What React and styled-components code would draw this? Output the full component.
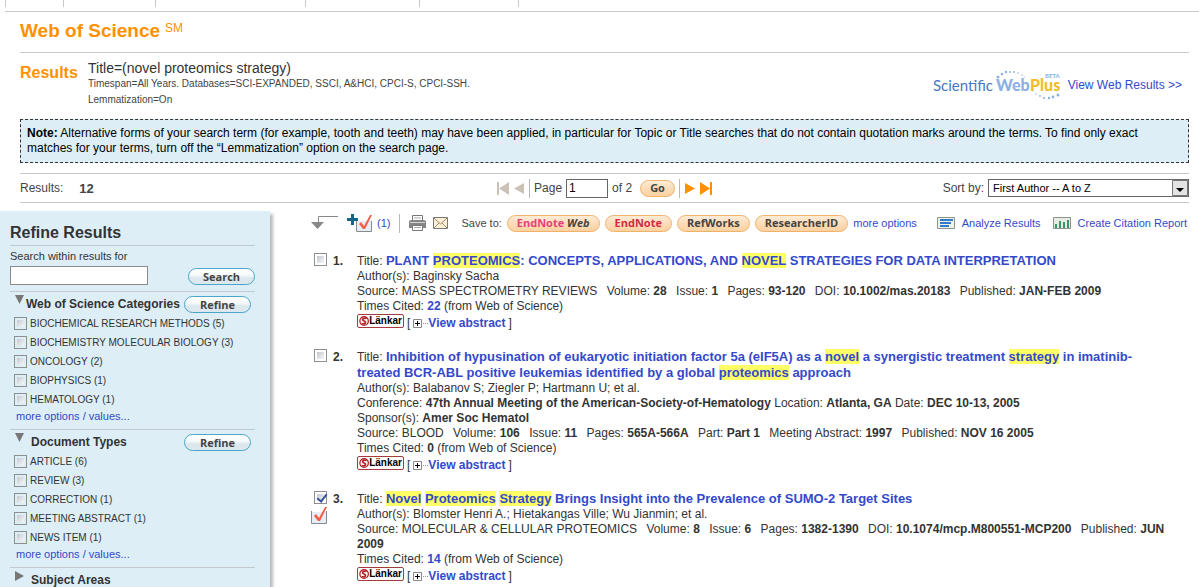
import React, { useState } from "react";
import styled, { createGlobalStyle, css } from "styled-components";

const GlobalStyle = createGlobalStyle`
  * {
    box-sizing: border-box;
  }
  body {
    margin: 0;
    background: #fff;
    color: #333;
    font-family: "Liberation Sans", Arial, sans-serif;
    font-size: 12px;
    line-height: 15px;
  }
  a {
    color: #3349cc;
    text-decoration: none;
  }
`;

const Page = styled.div`
  height: 100vh;
  overflow: hidden;
  display: flex;
  flex-direction: column;
`;

const TabStrip = styled.div`
  display: flex;
  height: 12px;
  margin-left: 5px;
  padding-bottom: 4px;
  border-bottom: 1px solid #c8c8c8;
`;

const TabGap = styled.div`
  width: ${(p) => p.$width}px;
  border-left: 1px solid #c8c8c8;
`;

const Content = styled.div`
  padding: 0 10px 0 20px;
`;

const Brand = styled.h1`
  display: flex;
  align-items: flex-start;
  gap: 5px;
  height: 41px;
  margin: 0;
  padding-top: 8px;
  border-bottom: 1px solid #c8c8c8;
  color: #ff9100;
  font-size: 19px;
  line-height: 22px;

  sup {
    font-size: 12px;
    font-weight: normal;
    line-height: 16px;
  }
`;

const Query = styled.section`
  display: flex;
  align-items: flex-start;
  height: 66px;
  padding-top: 7px;
`;

const QueryLabel = styled.h2`
  width: 68px;
  margin: 0;
  padding-top: 3px;
  color: #ff9100;
  font-size: 16px;
  line-height: 20px;
`;

const QueryText = styled.div`
  flex: 1;
  color: #444;
  font-size: 10px;
  line-height: 16px;

  strong {
    display: block;
    color: #333;
    font-size: 14px;
    font-weight: normal;
  }
`;

const WebPlus = styled.div`
  display: flex;
  align-items: flex-start;
  gap: 7px;
  padding: 9px 7px 0 0;

  a {
    padding-top: 9px;
  }
`;

const Note = styled.p`
  margin: 0 0 10px;
  padding: 6px;
  border: 1px dashed #333;
  background: #ddeef7;
  color: #000;
`;

const ResultBar = styled.div`
  display: grid;
  grid-template-columns: 1fr auto 1fr;
  align-items: center;
  height: 30px;
  border-top: 1px solid #c8c8c8;
  border-bottom: 1px solid #c8c8c8;
  color: #444;
`;

const Count = styled.div`
  display: flex;
  gap: 16px;

  b {
    font-size: 13px;
  }
`;

const Pager = styled.form`
  display: flex;
  align-items: center;
  gap: 4px;
`;

const PageTotal = styled.span`
  padding-right: 4px;
`;

const PageInput = styled.input`
  width: 42px;
  height: 19px;
  padding: 0 2px;
  border: 1px solid #666;
  font: 12px "Liberation Sans", Arial, sans-serif;
`;

const ArrowButton = styled.button`
  display: flex;
  padding: 0;
  border: 0;
  background: none;
`;

const Rule = styled.span`
  width: 1px;
  height: 19px;
  background: #b8b8b8;
`;

const Pill = styled.button`
  height: 17px;
  padding: 0 9px;
  border: 1px solid #f2b169;
  border-radius: 9px;
  background: linear-gradient(#fdecd8, #fcdcb8 50%, #fbd2a2);
  color: #444;
  font: bold 11px/14px "Open Sans", "Noto Sans", sans-serif;
  white-space: nowrap;

  ${(p) =>
    p.$blue &&
    css`
      width: 67px;
      border-color: #4ba6c9;
      background: linear-gradient(#fff, #f7fafb 40%, #dde8ee 60%, #dde8ee);
    `}

  em {
    color: ${(p) => p.$accent};
    font-style: normal;
  }
`;

const SortBox = styled.div`
  display: flex;
  justify-content: flex-end;
  align-items: center;
  gap: 4px;
`;

const SelectWrap = styled.div`
  position: relative;
  width: 201px;

  svg {
    position: absolute;
    top: 1px;
    right: 1px;
    pointer-events: none;
  }
`;

const Select = styled.select`
  display: block;
  width: 100%;
  height: 18px;
  padding: 0 4px;
  appearance: none;
  border: 1px solid #666;
  border-radius: 0;
  background: #fff;
  color: #000;
  font: 11px "Liberation Sans", Arial, sans-serif;
`;

const Columns = styled.div`
  display: flex;
  flex: 1;
  align-items: stretch;
  min-height: 0;
  padding: 8px 10px 0 0;
`;

const Sidebar = styled.aside`
  flex: none;
  width: 270px;
  padding: 12px 15px 0 10px;
  background: #ddeef7;
  box-shadow: 3px 3px 3px #bbb;
`;

const SideTitle = styled.h2`
  margin: 0 0 3px;
  padding-bottom: 3px;
  border-bottom: 1px solid #c2cace;
  font-size: 16px;
  line-height: 19px;
`;

const Within = styled.form`
  padding-bottom: 6px;
  border-bottom: 1px solid #c2cace;
  font-size: 11px;
`;

const WithinRow = styled.div`
  display: flex;
  justify-content: space-between;
  align-items: flex-end;
  padding-top: 2px;
`;

const WithinInput = styled.input`
  width: 138px;
  height: 19px;
  border: 1px solid #8a8a8a;
  background: #fff;
`;

const Facet = styled.section`
  padding-bottom: 6px;
  border-bottom: 1px solid #c2cace;
`;

const FacetHead = styled.div`
  display: flex;
  align-items: center;
  height: 22px;
  padding: 3px 4px 0 5px;

  svg {
    align-self: flex-start;
    margin-right: ${(p) => (p.$tight ? 2 : 7)}px;
  }

  h3 {
    flex: 1;
    margin: 0;
    font-size: 12px;
    white-space: nowrap;
  }
`;

const Option = styled.label`
  display: flex;
  align-items: center;
  gap: 3px;
  height: 19px;
  padding-left: 4px;
  font-size: 10px;
`;

const Check = styled.input.attrs({ type: "checkbox" })`
  flex: none;
  width: 13px;
  height: 13px;
  margin: 0;
  appearance: none;
  border: 1px solid #8e8f8f;
  background: linear-gradient(135deg, #c4c9d0, #f6f6f6) content-box #f6f6f6;
  padding: 2px;

  &:checked::after {
    content: "";
    display: block;
    width: 4px;
    height: 8px;
    margin: -2px 0 0 2px;
    border: solid #36529c;
    border-width: 0 2px 2px 0;
    transform: rotate(38deg);
  }
`;

const MoreLink = styled.a`
  display: block;
  padding-left: 6px;
  font-size: 11px;
  line-height: 14px;
`;

const Main = styled.main`
  flex: 1;
  min-width: 0;
  padding-left: 41px;
`;

const Toolbar = styled.div`
  display: flex;
  align-items: center;
  gap: 9px;
  height: 24px;
  margin-bottom: 18px;
  color: #444;
  font-size: 11px;
  white-space: nowrap;
`;

const ToolGroup = styled.div`
  display: flex;
  align-items: center;
  gap: ${(p) => p.$gap}px;
  padding-right: ${(p) => p.$end || 0}px;
`;

const Reports = styled.div`
  display: flex;
  flex: 1;
  justify-content: flex-end;
  gap: 12px;
  padding-right: 2px;

  a {
    display: flex;
    align-items: center;
    gap: 7px;
  }
`;

const Record = styled.article`
  display: grid;
  grid-template-columns: 19px 24px 1fr;
  margin-bottom: 18px;
  padding-left: 3px;
`;

const Marks = styled.div`
  display: flex;
  flex-direction: column;
  gap: 3px;

  svg {
    margin-left: -3px;
  }
`;

const Number = styled.b`
  line-height: 17px;
`;

const Title = styled.div`
  line-height: 16px;

  a {
    font-size: 13px;
    font-weight: bold;
  }

  mark {
    background: #ffff66;
    color: inherit;
  }
`;

const Line = styled.div`
  a {
    font-weight: bold;
  }
`;

const Field = styled.span`
  margin-right: ${(p) => (p.$close ? 0 : 6)}px;
`;

const Abstract = styled.div`
  display: flex;
  align-items: flex-end;
  gap: 3px;
  height: 17px;

  a {
    font-weight: bold;
  }
`;

const Lankar = styled.button`
  display: flex;
  align-items: center;
  align-self: flex-start;
  width: 47px;
  height: 14px;
  padding: 0 1px;
  border: 1px solid #a33b3f;
  border-radius: 2px;
  background: #fff;
  color: #000;
  font: bold 10px/12px "Liberation Sans", Arial, sans-serif;
`;

const ViewLink = styled.a`
  display: flex;
  align-items: center;
`;

const Triangle = ({ open }) => (
  <svg width="9" height="10" viewBox="0 0 9 10">
    <path d={open ? "M0 0h9L4.500 9z" : "M0 0v10l9-5z"} fill="#777" />
  </svg>
);

const PageArrow = ({ color, back, end }) => (
  <svg width="12" height="13" viewBox="0 0 12 13" fill={color}>
    <g transform={back ? "translate(12 0) scale(-1 1)" : undefined}>
      <path d={end ? "M0 0l10 6.500L0 13z" : "M1 1l10 5.500L1 12z"} />
      {end && <path d="M10 0h2v13h-2z" />}
    </g>
  </svg>
);

const MarkedBox = () => (
  <svg width="17" height="17" viewBox="0 0 17 17">
    <path d="M1 5h14v11H1z" fill="#e7edf4" />
    <path d="M.5 4v12.500h15V4" fill="none" stroke="#858b91" />
    <path d="M3 9l2-2 3 4 6-11h2l-7 14H7z" fill="#f2604c" />
  </svg>
);

const AddMarked = () => (
  <svg width="26" height="19" viewBox="0 0 26 19">
    <path d="M10 7h15v11H10z" fill="#e7edf4" />
    <path d="M9.500 7v10.500h15V7" fill="none" stroke="#858b91" />
    <path d="M12 10l2-2 3 4 6-11h2l-7 14h-2z" fill="#f2604c" />
    <path d="M4 0h3v4h4v3H7v4H4V7H0V4h4z" fill="#17638a" />
  </svg>
);

const DownElbow = () => (
  <svg width="27" height="14" viewBox="0 0 27 14">
    <path d="M27 .5H7.500V7" fill="none" stroke="#888" />
    <path d="M0 6h13l-6.500 7z" fill="#888" />
  </svg>
);

const Printer = () => (
  <svg width="17" height="16" viewBox="0 0 17 16">
    <path d="M3.500 6V.5h10V6" fill="#fff" stroke="#777" />
    <path d="M5 3h7" stroke="#aaa" />
    <path d="M0 6l2-1h13l2 1v7H0z" fill="#858585" />
    <path d="M1 7.500h15" stroke="#d5d5d5" />
    <path d="M3.500 10.500h10v5h-10z" fill="#fff" stroke="#777" />
    <path d="M5 12.500h7" stroke="#aaa" />
  </svg>
);

const Envelope = () => (
  <svg width="15" height="12" viewBox="0 0 15 12">
    <path d="M.5.5h14v11H.5z" fill="#fff0d5" stroke="#777" />
    <path d="M1 1l6.500 6L14 1M1 11l5-5M14 11L9 6" fill="none" stroke="#a08c72" />
  </svg>
);

const ListIcon = () => (
  <svg width="18" height="12" viewBox="0 0 18 12">
    <path d="M.5.5h17v11H.5z" fill="#eef3e8" stroke="#8d938d" />
    <path d="M3 2h13v2H3zM3 5h11v2H3zM3 8h9v2H3z" fill="#3179cf" />
  </svg>
);

const ChartIcon = () => (
  <svg width="18" height="12" viewBox="0 0 18 12">
    <path d="M.5.5h17v11H.5z" fill="#e7ebe3" stroke="#8d938d" />
    <path d="M2 7h2v4H2zM6 4h2v7H6zM10 5h2v6h-2zM14 3h2v8h-2z" fill="#37966a" />
  </svg>
);

const PlusBox = () => (
  <svg width="15" height="9" viewBox="0 0 15 9">
    <path d="M.5.5h8v8h-8z" fill="#fff" stroke="#888" />
    <path d="M2 4h5v1H2zM4 2h1v5H4z" fill="#000" />
    <path d="M10 4.500h5" stroke="#999" strokeDasharray="1 1" />
  </svg>
);

const LankarIcon = () => (
  <svg width="12" height="12" viewBox="0 0 12 12">
    <circle cx="6" cy="6" r="5" fill="#fff" stroke="#b32025" strokeWidth="1.500" />
    <path d="M9 3C4 2 3 5 6 6s2 4-3 3" fill="none" stroke="#b32025" strokeWidth="2" />
  </svg>
);

// dots of the two arcs round the logo: x, y, radius
const logoDots = [
  [65, 8, 1.5], [69, 5, 1.3], [73, 3, 1.2], [77, 3, 1], [81, 3, 0.9],
  [85, 4, 0.8], [89, 6, 0.7], [92, 8, 0.6], [100, 22, 0.6], [103, 25, 0.7],
  [107, 27, 0.9], [111, 29, 1.1], [116, 29, 1.2], [120, 28, 1.4], [125, 26, 1.5],
];

const WebPlusLogo = () => (
  <svg width="128" height="31" viewBox="0 0 128 31" fontFamily="Lato, sans-serif">
    {logoDots.map(([x, y, r]) => (
      <circle key={x} cx={x} cy={y} r={r} fill="#8cb1e2" />
    ))}
    <text x="0" y="22" fontSize="15" fill="#4777bf">Scientific</text>
    <text x="63" y="22" fontSize="16" fontWeight="900" fill="#8cb1e2">Web</text>
    <text x="97" y="22" fontSize="16" fontWeight="900" fill="#f0bd2b">Plus</text>
    <text x="112" y="9" fontSize="6" fontWeight="bold" fill="#8cb1e2">BETA</text>
  </svg>
);

const tabs = [58, 92, 150, 114, 99, 20];

const facets = [
  {
    name: "Web of Science Categories",
    tight: true,
    options: [
      "BIOCHEMICAL RESEARCH METHODS (5)",
      "BIOCHEMISTRY MOLECULAR BIOLOGY (3)",
      "ONCOLOGY (2)",
      "BIOPHYSICS (1)",
      "HEMATOLOGY (1)",
    ],
  },
  {
    name: "Document Types",
    options: [
      "ARTICLE (6)",
      "REVIEW (3)",
      "CORRECTION (1)",
      "MEETING ABSTRACT (1)",
      "NEWS ITEM (1)",
    ],
  },
];

// fields of a line: name, value, plain value, no gap after
const records = [
  {
    title: (
      <>
        PLANT <mark>PROTEOMICS</mark>: CONCEPTS, APPLICATIONS, AND{" "}
        <mark>NOVEL</mark> STRATEGIES FOR DATA INTERPRETATION
      </>
    ),
    lines: [
      [["Author(s)", "Baginsky Sacha", true]],
      [
        ["Source", "MASS SPECTROMETRY REVIEWS", true],
        ["Volume", "28"],
        ["Issue", "1"],
        ["Pages", "93-120"],
        ["DOI", "10.1002/mas.20183"],
        ["Published", "JAN-FEB 2009"],
      ],
    ],
    cited: 22,
  },
  {
    title: (
      <>
        Inhibition of hypusination of eukaryotic initiation factor 5a (eIF5A) as
        a <mark>novel</mark> a synergistic treatment <mark>strategy</mark> in
        imatinib-
        <br />
        treated BCR-ABL positive leukemias identified by a global{" "}
        <mark>proteomics</mark> approach
      </>
    ),
    lines: [
      [["Author(s)", "Balabanov S; Ziegler P; Hartmann U; et al.", true]],
      [
        [
          "Conference",
          "47th Annual Meeting of the American-Society-of-Hematology",
          false,
          true,
        ],
        ["Location", "Atlanta, GA", false, true],
        ["Date", "DEC 10-13, 2005"],
      ],
      [["Sponsor(s)", "Amer Soc Hematol"]],
      [
        ["Source", "BLOOD", true],
        ["Volume", "106"],
        ["Issue", "11"],
        ["Pages", "565A-566A"],
        ["Part", "Part 1"],
        ["Meeting Abstract", "1997"],
        ["Published", "NOV 16 2005"],
      ],
    ],
    cited: 0,
  },
  {
    title: (
      <>
        <mark>Novel</mark> <mark>Proteomics</mark> <mark>Strategy</mark> Brings
        Insight into the Prevalence of SUMO-2 Target Sites
      </>
    ),
    lines: [
      [["Author(s)", "Blomster Henri A.; Hietakangas Ville; Wu Jianmin; et al.", true]],
      [
        ["Source", "MOLECULAR & CELLULAR PROTEOMICS", true],
        ["Volume", "8"],
        ["Issue", "6"],
        ["Pages", "1382-1390"],
        ["DOI", "10.1074/mcp.M800551-MCP200"],
        ["Published", "JUN 2009"],
      ],
    ],
    cited: 14,
    marked: true,
  },
];

const App = () => {
  const [page, setPage] = useState("1");

  return (
    <Page>
      <GlobalStyle />
      <TabStrip>
        {tabs.map((width) => (
          <TabGap key={width} $width={width} />
        ))}
      </TabStrip>
      <Content>
        <Brand>
          Web of Science <sup>SM</sup>
        </Brand>
        <Query>
          <QueryLabel>Results</QueryLabel>
          <QueryText>
            <strong>Title=(novel proteomics strategy)</strong>
            Timespan=All Years. Databases=SCI-EXPANDED, SSCI, A&amp;HCI, CPCI-S,
            CPCI-SSH.
            <br />
            Lemmatization=On
          </QueryText>
          <WebPlus>
            <WebPlusLogo />
            <a href="#web">View Web Results &gt;&gt;</a>
          </WebPlus>
        </Query>
        <Note>
          <b>Note:</b> Alternative forms of your search term (for example, tooth
          and teeth) may have been applied, in particular for Topic or Title
          searches that do not contain quotation marks around the terms. To find
          only exact matches for your terms, turn off the “Lemmatization” option
          on the search page.
        </Note>
        <ResultBar>
          <Count>
            Results: <b>12</b>
          </Count>
          <Pager onSubmit={(e) => e.preventDefault()}>
            <ArrowButton type="button" aria-label="First page">
              <PageArrow color="#cbc1b7" back end />
            </ArrowButton>
            <ArrowButton type="button" aria-label="Previous page">
              <PageArrow color="#cbc1b7" back />
            </ArrowButton>
            <Rule />
            <label htmlFor="page">Page</label>
            <PageInput
              id="page"
              value={page}
              onChange={(e) => setPage(e.target.value)}
            />
            <PageTotal>of 2</PageTotal>
            <Pill>Go</Pill>
            <Rule />
            <ArrowButton type="button" aria-label="Next page">
              <PageArrow color="#ff9100" />
            </ArrowButton>
            <ArrowButton type="button" aria-label="Last page">
              <PageArrow color="#ff9100" end />
            </ArrowButton>
          </Pager>
          <SortBox>
            <label htmlFor="sort">Sort by:</label>
            <SelectWrap>
              <Select id="sort">
                <option>First Author -- A to Z</option>
              </Select>
              <svg width="16" height="16" viewBox="0 0 16 16">
                <path d="M.5.5h15v15H.5z" fill="#e3e3e3" stroke="#777" />
                <path d="M4 8h8l-4 4z" fill="#000" />
              </svg>
            </SelectWrap>
          </SortBox>
        </ResultBar>
      </Content>
      <Columns>
        <Sidebar>
          <SideTitle>Refine Results</SideTitle>
          <Within onSubmit={(e) => e.preventDefault()}>
            <label htmlFor="within">Search within results for</label>
            <WithinRow>
              <WithinInput id="within" />
              <Pill $blue>Search</Pill>
            </WithinRow>
          </Within>
          {facets.map((facet) => (
            <Facet key={facet.name}>
              <FacetHead $tight={facet.tight}>
                <Triangle open />
                <h3>{facet.name}</h3>
                <Pill $blue>Refine</Pill>
              </FacetHead>
              {facet.options.map((option) => (
                <Option key={option}>
                  <Check />
                  {option}
                </Option>
              ))}
              <MoreLink href="#more">more options / values...</MoreLink>
            </Facet>
          ))}
          <FacetHead>
            <Triangle />
            <h3>Subject Areas</h3>
          </FacetHead>
        </Sidebar>
        <Main>
          <Toolbar>
            <DownElbow />
            <ToolGroup $gap={4}>
              <AddMarked />
              <a href="#marked">(1)</a>
            </ToolGroup>
            <Rule />
            <ToolGroup $gap={7} $end={4}>
              <Printer />
              <Envelope />
            </ToolGroup>
            <ToolGroup $gap={5}>
              Save to:
              <Pill $accent="#e8407a">
                <em>EndNote</em> <i>Web</i>
              </Pill>
              <Pill $accent="#d42a45">
                <em>EndNote</em>
              </Pill>
              <Pill>RefWorks</Pill>
              <Pill>ResearcherID</Pill>
              <a href="#options">more options</a>
            </ToolGroup>
            <Reports>
              <a href="#analyze">
                <ListIcon />
                Analyze Results
              </a>
              <a href="#citation">
                <ChartIcon />
                Create Citation Report
              </a>
            </Reports>
          </Toolbar>
          {records.map((record, index) => (
            <Record key={index}>
              <Marks>
                <Check
                  defaultChecked={record.marked}
                  aria-label={`Select record ${index + 1}`}
                />
                {record.marked && <MarkedBox />}
              </Marks>
              <Number>{index + 1}.</Number>
              <div>
                <Title>
                  Title: <a href="#record">{record.title}</a>
                </Title>
                {record.lines.map((fields, i) => (
                  <Line key={i}>
                    {fields.map(([name, value, plain, close]) => (
                      <React.Fragment key={name}>
                        <Field $close={close}>
                          {name}: {plain ? value : <b>{value}</b>}
                        </Field>{" "}
                      </React.Fragment>
                    ))}
                  </Line>
                ))}
                <Line>
                  Times Cited:{" "}
                  {record.cited ? <a href="#cited">{record.cited}</a> : <b>0</b>}{" "}
                  (from Web of Science)
                </Line>
                <Abstract>
                  <Lankar type="button">
                    <LankarIcon />
                    Länkar
                  </Lankar>
                  [
                  <ViewLink href="#abstract">
                    <PlusBox />
                    View abstract
                  </ViewLink>
                  ]
                </Abstract>
              </div>
            </Record>
          ))}
        </Main>
      </Columns>
    </Page>
  );
};

export default App;
